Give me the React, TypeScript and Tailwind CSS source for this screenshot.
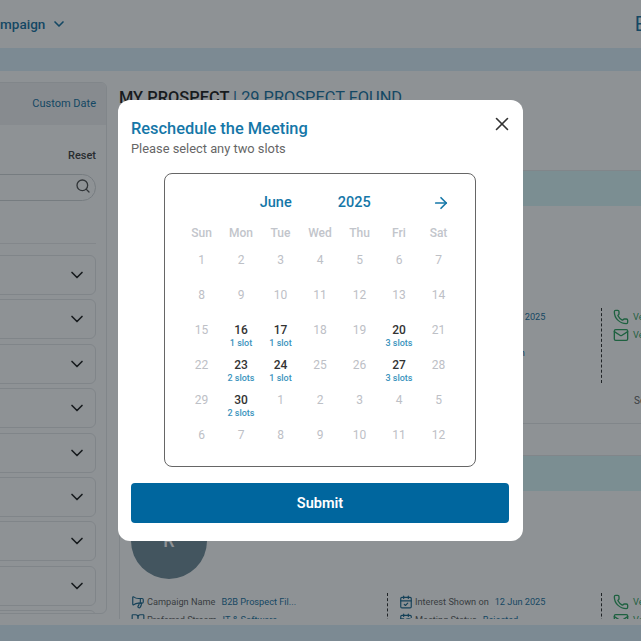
import React from "react";
import { ArrowRight, CalendarCheck, ChevronDown, Mail, Megaphone, Phone, Search, X, BookOpen, CalendarClock } from "lucide-react";

const filterRows = ["Campaign", "Stream", "Course", "City", "State", "Status", "Source", "Intake", "Level"];

const weekDays = ["Sun", "Mon", "Tue", "Wed", "Thu", "Fri", "Sat"];

interface Day {
  label: number;
  slots?: string;
}

const days: Day[] = [
  { label: 1 }, { label: 2 }, { label: 3 }, { label: 4 }, { label: 5 }, { label: 6 }, { label: 7 },
  { label: 8 }, { label: 9 }, { label: 10 }, { label: 11 }, { label: 12 }, { label: 13 }, { label: 14 },
  { label: 15 }, { label: 16, slots: "1 slot" }, { label: 17, slots: "1 slot" }, { label: 18 }, { label: 19 }, { label: 20, slots: "3 slots" }, { label: 21 },
  { label: 22 }, { label: 23, slots: "2 slots" }, { label: 24, slots: "1 slot" }, { label: 25 }, { label: 26 }, { label: 27, slots: "3 slots" }, { label: 28 },
  { label: 29 }, { label: 30, slots: "2 slots" }, { label: 1 }, { label: 2 }, { label: 3 }, { label: 4 }, { label: 5 },
  { label: 6 }, { label: 7 }, { label: 8 }, { label: 9 }, { label: 10 }, { label: 11 }, { label: 12 },
];

const ProspectCard = ({ className }: { className: string }) => (
  <section className={`border border-[#e4e6e8] rounded-md ${className}`}>
    <div className="h-[34.5px] bg-[#d8f6f8]" />
    <div className="h-[217.5px] pl-[11px] pt-[12px]">
      <div className="w-[76px] h-[76px] rounded-full bg-[#688492] flex items-center justify-center text-white text-[18px] font-medium">
        R
      </div>
      <div className="flex mt-[14px] text-[9.2px] leading-[18px]">
        <div className="w-[256px] flex flex-col">
          <div className="flex items-center gap-[2px] whitespace-nowrap">
            <Megaphone size={14} className="text-[#0d5c85] -scale-x-100" />
            <span className="text-[#555] mr-[4px]">Campaign Name</span>
            <span className="text-[#0d6a9a]">B2B Prospect Fil...</span>
          </div>
          <div className="flex items-center gap-[2px] whitespace-nowrap">
            <BookOpen size={14} className="text-[#0d5c85]" />
            <span className="text-[#555] mr-[4px]">Preferred Stream</span>
            <span className="text-[#0d6a9a]">IT &amp; Software</span>
          </div>
        </div>
        <div className="w-[214px] h-[75px] border-l border-dashed border-[#222] pl-[11px] flex flex-col">
          <div className="flex items-center gap-[2px] whitespace-nowrap">
            <CalendarCheck size={14} className="text-[#0d5c85]" />
            <span className="text-[#555] mr-[4px]">Interest Shown on</span>
            <span className="text-[#0d6a9a]">12 Jun 2025</span>
          </div>
          <div className="flex items-center gap-[2px] whitespace-nowrap">
            <CalendarClock size={14} className="text-[#0d5c85]" />
            <span className="text-[#555] mr-[4px]">Meeting Status</span>
            <span className="text-[#0d6a9a]">Rejected</span>
          </div>
          <div className="pl-[96px] text-[#0d6a9a]">English</div>
        </div>
        <div className="h-[75px] border-l border-dashed border-[#222] pl-[11px] flex flex-col text-[#1f9d55] whitespace-nowrap">
          <div className="flex items-center gap-[4px]"><Phone size={16} />Verified</div>
          <div className="flex items-center gap-[4px]"><Mail size={16} />Verified</div>
        </div>
      </div>
      <div className="pl-[503px] mt-[9px] text-[10px] leading-[18px] text-[#555]">See more</div>
    </div>
  </section>
);

export default function App() {
  return (
    <div className="relative w-[641px] h-[641px] overflow-hidden bg-white font-['Roboto',sans-serif]">
      <div className="flex flex-col h-full">
        <header className="h-12 shrink-0 flex items-center text-[#0a6a9c] text-[13.5px] font-medium">
          <span className="-ml-[16px]">Campaign</span>
          <ChevronDown size={16} strokeWidth={2.5} className="ml-[6px]" />
          <span className="ml-auto -mr-[5px] text-[20px] font-normal">E</span>
        </header>
        <div className="h-[23px] shrink-0 bg-[#daeefa]" />

        <div className="flex-1 min-h-0 flex pt-[11px] overflow-hidden">
          {/* Filters */}
          <aside className="-ml-[170px] w-[277px] shrink-0 h-[532px] border border-[#e4e6e8] rounded-md overflow-hidden">
            <div className="h-[42px] bg-[#f0f1f2] flex items-center justify-end pr-[10px] text-[11px] text-[#0a6a9c]">
              Custom Date
            </div>
            <div className="pl-[10px] pr-[10px]">
              <div className="text-right text-[11px] font-medium text-[#333] mt-[24px] leading-[14px]">Reset</div>
              <div className="mt-[11px] h-[27px] rounded-full border border-[#cfd2d5] flex items-center justify-end pr-[4px] pb-[4px]">
                <Search size={16} className="text-[#444]" />
              </div>
              <div className="mt-[42px] border-t border-[#e8e9ea]" />
              <div className="mt-[11px] flex flex-col gap-[4.4px]">
                {filterRows.map((row) => (
                  <div key={row} className="h-10 shrink-0 border border-[#e2e4e6] rounded-md flex items-center justify-end pr-[8px]">
                    <ChevronDown size={20} strokeWidth={2} className="text-[#111]" />
                  </div>
                ))}
              </div>
            </div>
          </aside>

          <main className="ml-3 w-[680px] shrink-0 h-[537px] overflow-hidden">
            <h1 className="text-[16.4px] leading-5 mt-[6px] whitespace-nowrap font-medium text-[#111]">
              MY PROSPECT <span className="font-normal text-[#0a6a9c]">| 29 PROSPECT FOUND</span>
            </h1>
            <ProspectCard className="mt-[62px]" />
            <ProspectCard className="mt-[31px]" />
          </main>
        </div>

        <div className="h-4 shrink-0 bg-[#daeefa]" />
      </div>

      {/* Overlay and dialog */}
      <div className="absolute inset-0 bg-[rgba(30,38,44,0.5)]" />
      <div className="absolute left-[118px] top-[100px] w-[405px] h-[441px] bg-white rounded-xl pl-[13px] pr-[14px] pt-[19px] flex flex-col">
        <div className="flex justify-between items-start">
          <div>
            <h2 className="text-[16.4px] leading-5 font-medium text-[#1577a8]">Reschedule the Meeting</h2>
            <p className="text-[12.85px] leading-[18px] mt-[1px] text-[#666]">Please select any two slots</p>
          </div>
          <X size={22} strokeWidth={1.75} className="text-[#333] mr-[-4px] -mt-[6px]" />
        </div>

        <div className="mt-[15px] self-center w-[312px] h-[294px] border border-[#666] rounded-lg px-[16.75px]">
          <div className="h-[19px] mt-[19px] flex items-center pl-[78px] text-[#1577a8] text-[14.5px] font-medium">
            <span>June</span>
            <span className="ml-[46px]">2025</span>
            <ArrowRight size={18} strokeWidth={2.25} className="ml-auto mr-[8px]" />
          </div>
          <div className="grid grid-cols-7 mt-[13px] text-[12px] leading-4 font-medium text-[#c2c5cb] text-center">
            {weekDays.map((d) => (
              <span key={d}>{d}</span>
            ))}
          </div>
          <div className="grid grid-cols-7 auto-rows-[35px] mt-[11px] text-center">
            {days.map((day, i) => (
              <div key={i} className="flex flex-col items-center">
                <span className={`text-[12px] leading-4 ${day.slots ? "font-medium text-[#333]" : "text-[#bdc0c6]"}`}>
                  {day.label}
                </span>
                {day.slots && (
                  <span className="text-[9px] leading-[11px] font-medium text-[#3b93bd]">{day.slots}</span>
                )}
              </div>
            ))}
          </div>
        </div>

        <button className="mt-4 h-10 w-full rounded bg-[#00669e] text-white text-[14.5px] font-semibold pt-px">
          Submit
        </button>
      </div>
    </div>
  );
}
